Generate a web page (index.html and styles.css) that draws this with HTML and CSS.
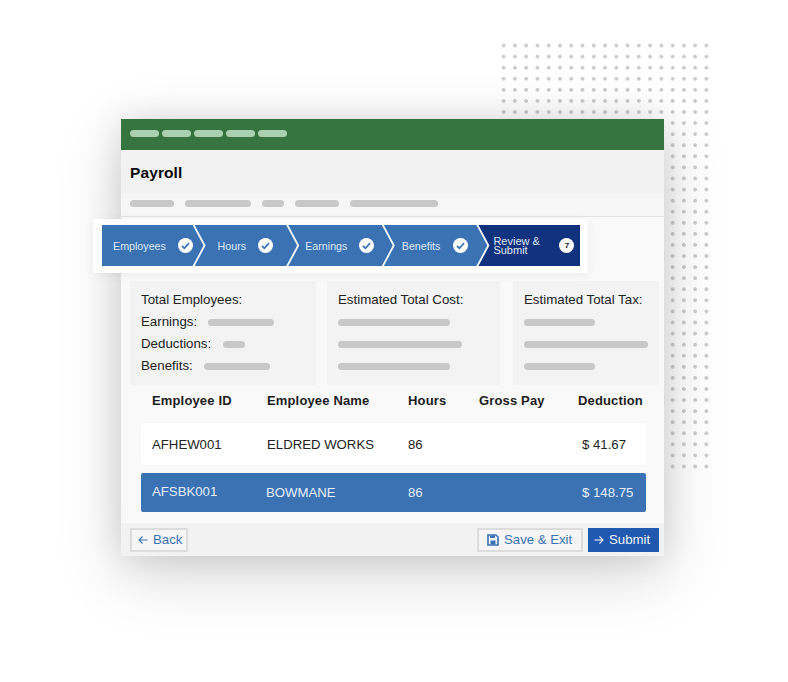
FILE: index.html
```html
<!DOCTYPE html>
<html lang="en">
<head>
<meta charset="utf-8">
<title>Payroll</title>
<link rel="stylesheet" href="styles.css">
</head>
<body>
<div class="page">
  <div class="dots"></div>
  <main class="window">
    <header class="topbar">
      <span class="pill"></span><span class="pill"></span><span class="pill"></span><span class="pill"></span><span class="pill"></span>
    </header>
    <div class="title"><h1>Payroll</h1></div>
    <nav class="subnav">
      <span class="bar w44"></span><span class="bar w66"></span><span class="bar w22"></span><span class="bar w44"></span><span class="bar w88"></span>
    </nav>
    <div class="stepper">
      <div class="step s1"><span>Employees</span><svg class="tick" viewBox="0 0 16 16"><circle cx="8" cy="8" r="8" fill="#fff"/><path d="M4.2 8.3l2.6 2.6 5-5.4" fill="none" stroke="#3a72b4" stroke-width="1.8"/></svg></div>
      <div class="step s2"><span>Hours</span><svg class="tick" viewBox="0 0 16 16"><circle cx="8" cy="8" r="8" fill="#fff"/><path d="M4.2 8.3l2.6 2.6 5-5.4" fill="none" stroke="#3a72b4" stroke-width="1.8"/></svg></div>
      <div class="step s3"><span>Earnings</span><svg class="tick" viewBox="0 0 16 16"><circle cx="8" cy="8" r="8" fill="#fff"/><path d="M4.2 8.3l2.6 2.6 5-5.4" fill="none" stroke="#3a72b4" stroke-width="1.8"/></svg></div>
      <div class="step s4"><span>Benefits</span><svg class="tick" viewBox="0 0 16 16"><circle cx="8" cy="8" r="8" fill="#fff"/><path d="M4.2 8.3l2.6 2.6 5-5.4" fill="none" stroke="#3a72b4" stroke-width="1.8"/></svg></div>
      <div class="step s5"><span class="two">Review &amp;<br>Submit</span><span class="badge">7</span></div>
    </div>
    <section class="cards">
      <div class="card c1">
        <div class="line">Total Employees:</div>
        <div class="line">Earnings:<span class="bar w66 a"></span></div>
        <div class="line">Deductions:<span class="bar w22 b"></span></div>
        <div class="line">Benefits:<span class="bar w66 c"></span></div>
      </div>
      <div class="card c2">
        <div class="line">Estimated Total Cost:</div>
        <div class="line"><span class="bar w112"></span></div>
        <div class="line"><span class="bar w124"></span></div>
        <div class="line"><span class="bar w112"></span></div>
      </div>
      <div class="card c3">
        <div class="line">Estimated Total Tax:</div>
        <div class="line"><span class="bar w71"></span></div>
        <div class="line"><span class="bar w124"></span></div>
        <div class="line"><span class="bar w71"></span></div>
      </div>
    </section>
    <section class="table">
      <div class="row head"><span>Employee ID</span><span>Employee Name</span><span>Hours</span><span>Gross Pay</span><span>Deduction</span></div>
      <div class="row plain"><span>AFHEW001</span><span>ELDRED WORKS</span><span>86</span><span></span><span class="amt">$ 41.67</span></div>
      <div class="row active"><span class="up">AFSBK001</span><span class="nudge">BOWMANE</span><span>86</span><span></span><span class="amt">$ 148.75</span></div>
    </section>
    <footer class="footer">
      <button class="btn back"><svg class="ico" viewBox="0 0 12 12"><path d="M10.5 6H2M5.5 2.5L2 6l3.5 3.5" fill="none" stroke="#3a72b4" stroke-width="1.1"/></svg>Back</button>
      <div class="spacer"></div>
      <button class="btn save"><svg class="ico" viewBox="0 0 12 12"><path d="M1 1h8l2 2v8H1z" fill="none" stroke="#3a72b4" stroke-width="1.6"/><path d="M3 1.5h5v2.5H3zM3.5 6.5h5v4h-5z" fill="#3a72b4"/></svg>Save &amp; Exit</button>
      <button class="btn submit"><svg class="ico" viewBox="0 0 12 12"><path d="M1.5 6H10M6.5 2.5L10 6l-3.5 3.5" fill="none" stroke="#fff" stroke-width="1.1"/></svg>Submit</button>
    </footer>
  </main>
</div>
</body>
</html>
```
FILE: styles.css
```css
* { box-sizing: border-box; }
html, body { margin: 0; background: #fff; }
body { font-family: "Liberation Sans", Arial, sans-serif; color: #222; }
.page { position: relative; width: 788px; height: 682px; padding: 119px 0 0 121px; overflow: hidden; }
.dots {
  position: absolute; left: 498px; top: 40px; width: 215px; height: 432px;
  background-image: radial-gradient(circle, #cbcbcb 1.6px, transparent 2.1px);
  background-size: 11.28px 11.08px;
}
.window {
  position: relative; width: 543px; height: 437px; background: #f9f9f9;
  box-shadow: 0 18px 60px rgba(0,0,0,.17), 0 0 30px rgba(0,0,0,.1);
  display: flex; flex-direction: column;
}
.topbar { height: 31px; background: #367540; display: flex; align-items: center; gap: 3px; padding: 0 0 3px 9px; }
.pill { width: 29px; height: 7px; border-radius: 4px; background: #a9d0af; }
.title { height: 44px; background: #f2f2f2; display: flex; align-items: center; padding: 1px 0 0 9px; }
h1 { margin: 0; font-size: 15.5px; font-weight: 700; color: #0a0a0a; letter-spacing: .1px; }
.subnav { height: 23px; background: #f6f6f6; border-bottom: 1px solid #e2e2e2; display: flex; align-items: center; gap: 11px; padding: 0 0 3px 9px; }
.bar { display: inline-block; height: 7px; border-radius: 4px; background: #c8c8c8; }
.w22 { width: 22px; } .w44 { width: 44px; } .w66 { width: 66px; } .w71 { width: 71px; } .w88 { width: 88px; } .w112 { width: 112px; } .w124 { width: 124px; }
.stepper {
  width: 495px; height: 54px; margin: 2px 0 0 -28px; padding: 6px 8px 7px 9px;
  background: #fff; display: flex; box-shadow: 0 2px 10px rgba(0,0,0,.06);
  position: relative;
}
.step {
  height: 41px; background: #3a72b4; color: #dfe9f6; font-size: 10.7px;
  display: flex; align-items: center; margin-left: -9px;
  clip-path: polygon(0 0, calc(100% - 11px) 0, 100% 50%, calc(100% - 11px) 100%, 0 100%, 11px 50%);
}
.s1 { width: 102px; margin-left: 0; padding-left: 11px; gap: 12px; clip-path: polygon(0 0, calc(100% - 11px) 0, 100% 50%, calc(100% - 11px) 100%, 0 100%); }
.s2 { width: 103px; padding-left: 23px; gap: 12px; }
.s3 { width: 105px; padding-left: 17px; gap: 12px; }
.s4 { width: 104px; padding-left: 18px; gap: 13px; }
.s5 { width: 102px; padding-left: 16px; gap: 18px; background: #11327f; clip-path: polygon(0 0, 100% 0, 100% 100%, 0 100%, 11px 50%); }
.two { line-height: 9px; width: 47px; flex: none; transform: translateX(-1px); font-size: 11px; }
.tick { width: 15px; height: 15px; flex: none; }
.badge { width: 15px; height: 15px; border-radius: 50%; background: #fff; color: #111; font-size: 8px; font-weight: 700; display: flex; align-items: center; justify-content: center; flex: none; }
.cards { display: flex; margin: 8px 0 0 9px; height: 104px; width: 529px; }
.card { background: #f3f3f3; padding: 8px 0 0 11px; height: 104px; border-radius: 2px; }
.c1 { width: 186px; }
.c2 { width: 173px; margin-left: 11px; }
.c3 { width: 146px; margin-left: 13px; }
.line { font-size: 13.3px; height: 22px; line-height: 16px; display: flex; align-items: center; color: #222; }
.line .a { margin-left: 11px; }
.line .b { margin-left: 12px; }
.line .c { margin-left: 11px; }
.table { flex: 1; padding: 0 18px 0 20px; }
.row { display: grid; grid-template-columns: 115px 141px 71px 99px 1fr; align-items: center; padding-left: 11px; width: 505px; }
.head { height: 30px; margin-bottom: 8px; font-size: 13px; font-weight: 700; color: #1c1c1c; letter-spacing: .15px; }
.plain { height: 42px; margin-bottom: 8px; font-size: 13.2px; color: #222; background: #fff; border-radius: 3px; }
.active { height: 39px; background: #3a72b4; color: #e6eef8; font-size: 13.2px; border-radius: 2px; }
.amt { padding-left: 4px; white-space: nowrap; }
.up { transform: translateY(-1px); }
.nudge { margin-left: -1px; }
.footer { height: 33px; background: #f2f2f2; display: flex; align-items: center; padding: 0 5px 0 9px; gap: 5px; }
.spacer { flex: 1; }
.btn { height: 24px; border: 2px solid #dcdcdc; background: #f5f5f5; color: #3a72b4; font: 13.2px "Liberation Sans", Arial, sans-serif; display: flex; align-items: center; gap: 4px; padding: 0 0 0 5px; }
.ico { width: 12px; height: 12px; flex: none; }
.back { width: 58px; }
.save { width: 106px; padding-left: 8px; gap: 5px; }
.submit { width: 71px; background: #2059b0; border: 0; color: #f0f4fb; padding-left: 5px; gap: 4px; }
```
